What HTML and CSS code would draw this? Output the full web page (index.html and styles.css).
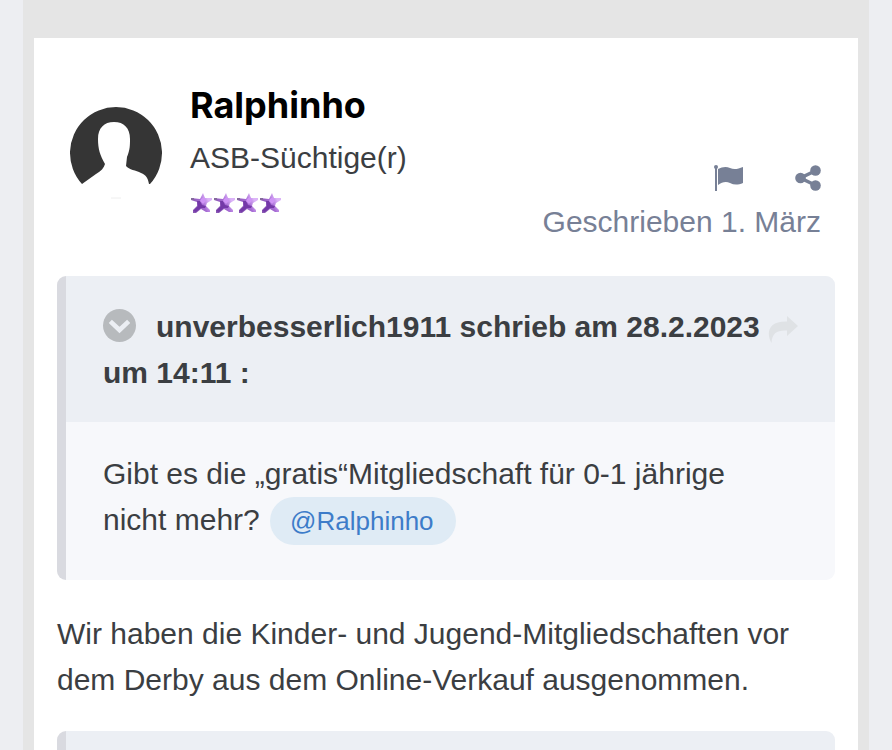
FILE: index.html
```html
<!DOCTYPE html>
<html lang="de">
<head>
    <meta charset="UTF-8">
    <meta name="viewport" content="width=device-width, initial-scale=1.0">
    <title>Ralphinho - ASB</title>
    <link rel="stylesheet" href="styles.css">
</head>
<body>
    <svg class="defs" aria-hidden="true">
        <defs>
            <linearGradient id="starFill" x1="0" y1="0.7" x2="1" y2="0.2">
                <stop offset="0.15" stop-color="#8a58b4"/>
                <stop offset="0.5" stop-color="#a66bd4"/>
                <stop offset="0.8" stop-color="#dcb4f8"/>
            </linearGradient>
            <symbol id="star" viewBox="0 0 23 23">
                <path d="M13 1 L15 6 L22 6 V8 L17 11 L16 14 L20 18 V20 H16 L11 17 L6 21 H3 V18 L7 14 L7 10 L1 8 V6 L10 7 Z" fill="url(#starFill)"/>
                <path d="M7 9 H10 L12 13 L16 14 L15 16 H11 L6 20 L3 19 L8 14 Z" fill="#7439a8"/>
                <path d="M11 7 L14 5 L16 9 L13 12 L10 9 Z" fill="#cf94f6"/>
                <path d="M1 6 H4 V8 H1 Z" fill="#84699c"/>
            </symbol>
        </defs>
    </svg>

    <main class="wrapper">
        <article class="post">
            <header class="post-header">
                <svg class="avatar" viewBox="0 0 92 92" role="img" aria-label="Avatar">
                    <path d="M12 77 A46 46 0 1 1 80 77 L79 77 C78 71 76 68 71 66 C66 63 59 63 56 59 L57 50 C60 43 60 38 60 32 C60 21 54 15 44 15 C34 15 28 21 28 32 C28 42 30 48 35 57 C34 61 31 64 26 67 Z" fill="#353535"/>
                    <path d="M41 91 H51" stroke="#eeeeee"/>
                </svg>
                <div class="author">
                    <h3 class="author-name">Ralphinho</h3>
                    <p class="author-rank">ASB-Süchtige(r)</p>
                    <div class="stars" role="img" aria-label="4 Sterne">
                        <svg><use href="#star"/></svg>
                        <svg><use href="#star"/></svg>
                        <svg><use href="#star"/></svg>
                        <svg><use href="#star"/></svg>
                    </div>
                </div>
                <div class="meta">
                    <div class="tools">
                        <button type="button" aria-label="Melden">
                            <svg class="icon-flag" viewBox="0 0 29 26">
                                <circle cx="2" cy="2" r="2"/>
                                <path d="M1 2 H3 V26 H1 Z M4 4 C8 2 12 1 16 3 C20 5 24 4 29 2 V18 C24 20 20 20 16 18 C12 16 8 17 4 20 Z"/>
                            </svg>
                        </button>
                        <button type="button" aria-label="Teilen">
                            <svg class="icon-share" viewBox="0 0 26 26">
                                <path d="M21 5.500 L5.500 13 L21 20.500" fill="none" stroke="#778096" stroke-width="3.600"/>
                                <circle cx="20.500" cy="5.500" r="5.300"/>
                                <circle cx="5.500" cy="13" r="5.300"/>
                                <circle cx="20.500" cy="20.500" r="5.300"/>
                            </svg>
                        </button>
                    </div>
                    <a class="date" href="#">Geschrieben 1. März</a>
                </div>
            </header>

            <blockquote class="quote">
                <div class="quote-head">
                    <button type="button" class="quote-toggle" aria-label="Zitat einklappen">
                        <svg viewBox="0 0 33 33">
                            <circle cx="16.500" cy="16.500" r="16.500" fill="#b7babd"/>
                            <path d="M9 14 L16.500 21 L24 14" fill="none" stroke="#eceff4" stroke-width="4.600" stroke-linecap="square"/>
                        </svg>
                    </button>
                    <a class="quote-jump" href="#" aria-label="Zum Beitrag">
                        <svg viewBox="0 0 30 28">
                            <path d="M19 0 L30 10 L19 20 V14.500 C9 14 4 17 3.500 27 C-2 17 0 5 19 5.500 Z"/>
                        </svg>
                    </a>
                    <span>unverbesserlich1911 schrieb am 28.2.2023 um 14:11 :</span>
                </div>
                <div class="quote-body">
                    <p>Gibt es die „gratis“Mitgliedschaft für 0-1 jährige nicht mehr? <a class="mention" href="#">@Ralphinho</a></p>
                </div>
            </blockquote>

            <p class="text">Wir haben die Kinder- und Jugend-Mitgliedschaften vor dem Derby aus dem Online-Verkauf ausgenommen.</p>

            <blockquote class="quote">
                <div class="quote-head"></div>
            </blockquote>
        </article>
    </main>
</body>
</html>
```
FILE: styles.css
```css
* { box-sizing: border-box; }
body { height: 100vh; margin: 0; padding: 0 23px; overflow: hidden; background: #edeef2; color: #3b3e42; font-family: "Liberation Sans", Arial, sans-serif; font-size: 30px; line-height: 46px; }
h3, p, blockquote { margin: 0; }
a { text-decoration: none; }
button { padding: 0; border: none; background: none; cursor: pointer; }
svg { display: block; }
.defs { position: absolute; width: 0; height: 0; }

.wrapper { padding: 38px 11px 0; background: #e5e5e5; }
.post { padding: 44px 23px 0; background: #fff; }

.post-header { display: flex; padding: 0 14px 31px 13px; }
.avatar { width: 92px; height: 92px; margin-top: 25px; flex-shrink: 0; }
.author { margin-left: 28px; }
.author-name { color: #000; font-family: Inter, sans-serif; font-size: 36px; font-weight: 700; line-height: 46px; }
.author-rank { padding-top: 7px; }
.stars { display: flex; padding-top: 11px; }
.stars svg { width: 23px; height: 23px; }

.meta { display: flex; flex-direction: column; align-items: flex-end; gap: 7px; margin-left: auto; padding-top: 83px; }
.tools { display: flex; gap: 52px; }
.tools svg { height: 26px; fill: #778096; }
.icon-flag { width: 29px; }
.icon-share { width: 26px; }
.date { color: #778096; line-height: 47px; white-space: nowrap; }

.quote { border-left: 9px solid #d9dae0; border-radius: 9px; overflow: hidden; background: #f7f8fb; }
.quote-head { padding: 28px 37px 26px; background: #eceff4; font-weight: 700; }
.quote-toggle { float: left; margin: 5px 20px 0 0; }
.quote-toggle svg { width: 33px; height: 33px; }
.quote-jump { float: right; margin-top: 12px; }
.quote-jump svg { width: 30px; height: 28px; fill: #dfe2e5; }
.quote-body { padding: 29px 46px 36px 37px; }
.mention { margin-left: 2px; padding: 9px 22px 9px 20px; border-radius: 25px; background: #dfebf5; color: #3d7cc9; font-size: 26px; }

.text { padding: 31px 0 28px; }
```
